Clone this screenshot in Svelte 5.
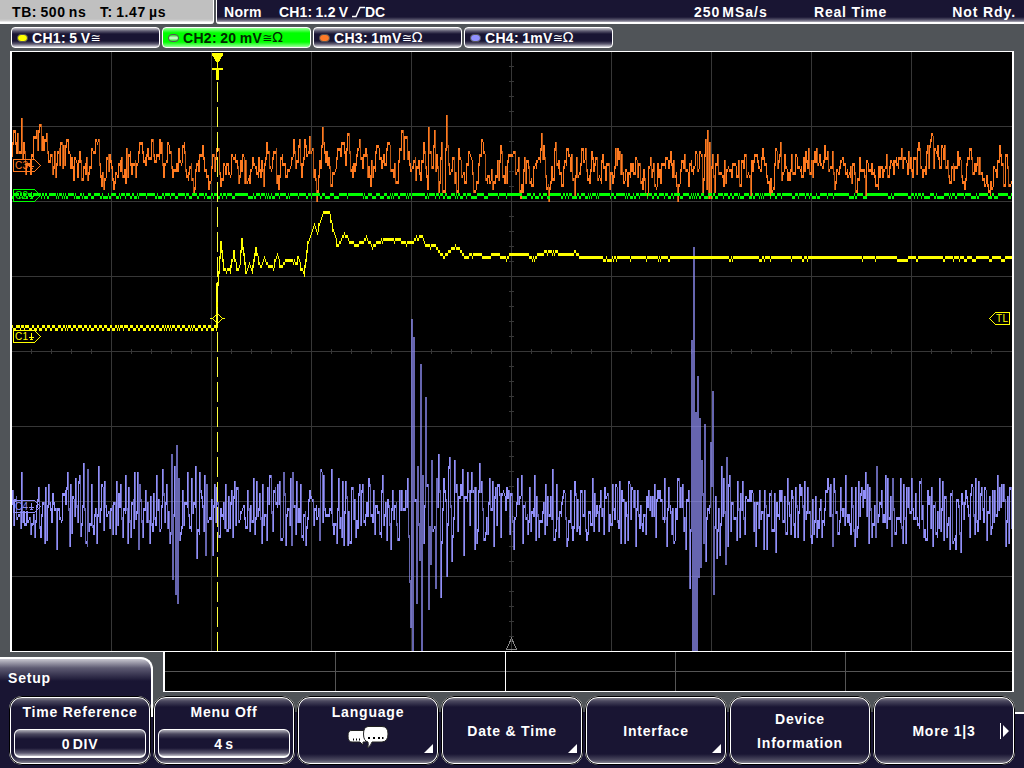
<script>
  const LEFT = 12;
  const RIGHT = 1011;
  const STEP = 3; // one ADC level on screen

  // small seeded generator so that the traces look the same on every load
  function random(seed) {
    let s = seed;
    return () => {
      s = (s * 1664525 + 1013904223) % 4294967296;
      return s / 4294967296;
    };
  }

  function parse(text) {
    return text
      .trim()
      .split(/\s+/)
      .map((p) => p.split(',').map(Number));
  }

  function lerp(points, x) {
    if (x <= points[0][0]) return points[0][1];
    for (let i = 1; i < points.length; i++) {
      const [x1, y1] = points[i];
      const [x0, y0] = points[i - 1];
      if (x <= x1) return y0 + ((y1 - y0) * (x - x0)) / (x1 - x0 || 1);
    }
    return points[points.length - 1][1];
  }

  // every column covers the range between a sample and the next one,
  // the beam is dimmer where the signal falls steeply
  function columns(ys) {
    let d = '';
    let dim = '';
    for (let i = 0; i < ys.length - 1; i++) {
      const diff = ys[i + 1] - ys[i];
      let top = ys[i];
      let bottom = top + STEP;
      if (Math.abs(diff) > STEP) {
        top = Math.min(ys[i], ys[i + 1]);
        bottom = Math.min(651, Math.max(ys[i], ys[i + 1]) + STEP);
      }
      const rect = `M${LEFT + i} ${top}h1V${bottom}h-1z`;
      if (diff > 12 || diff < -60) dim += rect;
      else d += rect;
    }
    return { d, dim };
  }

  const snap = (y, base) => base + Math.round((y - base) / STEP) * STEP;

  const c1Points = parse(`
    218,282 219,270 221,241 224,268 226,270 228,265 230,270 234,250 237,267 240,262 242,238 246,270
    249,262 252,270 256,247 260,266 264,257 268,264 273,267 277,253 281,266 285,260 292,260 297,261
    298,256 304,275 308,240 314,223 317,233 322,211 329,211 333,228 338,245 343,232 347,236 350,242
    358,243 366,236 372,245 378,240 388,238 398,239 412,242 416,235 422,235 425,244 435,244 440,253
    445,253 455,245 461,250 465,256 475,252 485,256 495,253 505,256 512,253 525,252 533,256 545,251
    555,250 565,254 575,251 580,256 1012,256`);

  const c3Points = parse(`
    12,153 14,130 18,133 22,118 25,150 30,160 34,135 37,131 40,124 43,137 47,133 50,160 54,167 58,150
    67,139 70,155 75,158 81,161 86,172 92,147 97,142 101,174 106,174 110,155 115,180 120,160 125,168
    130,150 136,175 140,142 145,157 152,139 155,160 160,139 163,163 168,142 172,165 178,170 184,142
    187,176 190,165 195,186 198,160 203,145 207,175 210,180 214,155 217,148 221,183 225,165 230,176
    235,154 240,175 243,155 248,178 252,165 258,175 262,160 264,183 267,142 270,167 275,152 280,175
    282,155 287,175 294,139 297,160 300,139 302,175 305,140 310,136 314,175 317,200 320,160 323,127
    327,150 330,165 332,183 335,170 338,148 342,142 345,152 348,133 352,165 353,175 360,139 363,165
    367,155 371,183 378,145 382,165 388,142 391,170 396,180 402,130 405,137 410,163 415,157 421,178
    424,142 428,188 429,127 432,165 435,130 439,190 442,142 443,190 447,115 448,145 450,173 454,157
    457,190 459,148 465,180 469,152 476,187 480,155 483,142 487,180 493,187 502,151 505,180 513,150
    518,170 521,195 528,160 532,185 537,160 542,133 546,175 549,200 556,142 562,184 567,148 575,192
    582,148 590,182 593,156 600,178 603,154 610,187 615,165 620,151 625,178 630,175 637,160 643,187
    650,162 655,184 660,170 670,160 675,175 678,200 685,154 689,184 696,151 700,151 703,190 705,155
    706,139 707,186 708,130 709,196 710,142 711,196 713,155 715,190 718,154 722,175 726,180 728,165
    734,162 740,183 743,160 747,175 751,192 755,155 760,170 763,148 770,192 773,186 777,152 780,155
    784,170 785,155 790,178 796,155 800,170 809,148 813,175 815,151 822,165 828,151 830,165 833,151
    835,187 843,157 850,175 856,190 861,170 866,192 868,164 880,175 890,165 896,158 902,149 906,160
    912,170 918,148 922,170 928,145 931,139 936,150 940,165 943,148 948,160 950,180 958,151 964,180
    970,148 974,172 980,157 988,184 990,192 996,170 1000,145 1004,183 1008,165 1011,180`);

  const c4Spikes = parse(`
    14,523 22,472 28,520 33,522 46,487 49,484 54,502 62,518 65,490 68,472 70,544 71,484 72,531 76,478
    81,534 84,463 86,541 88,469 89,529 93,525 97,541 99,466 102,484 104,528 105,481 116,532 121,484
    126,475 129,487 131,535 135,472 143,535 146,490 150,541 156,523 163,469 165,520 167,484 168,526
    170,541 172,454 173,577 175,466 176,592 177,445 178,601 179,478 181,532 188,472 190,526 196,466
    197,556 200,472 204,529 205,475 207,484 213,553 215,484 217,487 226,484 233,535 235,481 238,487
    246,526 254,478 257,481 262,541 263,484 267,538 271,475 274,490 284,472 286,543 291,478 292,543
    293,472 297,481 301,484 306,543 310,490 320,538 321,469 324,475 329,514 332,469 334,532 339,478
    342,535 344,543 346,481 348,543 352,487 356,535 360,484 363,484 365,523 370,484 374,490 381,535
    382,490 387,538 393,490 400,490 408,478 409,535 410,580 411,625 412,319 413,651 414,337 417,601
    418,466 420,558 421,364 422,651 423,475 424,541 426,397 427,484 429,607 431,562 432,460 433,529
    436,586 437,478 439,454 441,595 442,541 444,478 447,574 449,466 450,457 452,559 453,535 455,460
    457,484 458,529 461,484 463,469 464,553 468,472 474,487 475,547 478,529 480,463 482,481 486,532
    490,478 493,481 494,544 496,487 499,484 501,535 502,493 507,487 509,490 514,547 518,478 521,493
    523,541 528,532 535,475 539,535 546,484 545,532 557,484 559,535 563,496 568,538 571,490 582,490
    587,538 593,478 597,505 599,529 601,490 604,532 605,487 612,523 616,484 622,490 625,541 629,481
    632,487 636,544 635,490 640,526 647,496 655,484 656,535 660,490 667,544 669,487 675,538 681,487
    683,484 686,547 689,490 690,586 691,529 692,340 693,651 694,247 695,651 696,412 697,651 698,376
    699,575 700,418 701,565 702,460 704,541 705,424 706,559 708,508 711,442 712,484 713,391 714,592
    716,496 717,556 720,553 722,466 724,478 726,562 727,457 729,484 737,538 738,481 740,535 746,496
    753,493 760,490 764,547 767,547 771,490 776,550 780,490 782,490 788,478 787,532 796,487 798,535
    802,487 804,538 808,487 812,541 814,532 817,535 826,490 829,487 833,544 835,490 841,487 846,475
    851,532 852,487 866,472 869,541 876,535 882,490 888,478 892,544 893,478 895,532 901,478 903,541
    904,484 906,541 916,493 920,481 925,529 928,490 932,487 940,478 944,538 947,535 950,547 953,541
    952,490 956,547 961,550 966,490 970,535 972,484 973,487 975,532 976,478 982,487 987,538 991,532
    1004,484 1006,544 1008,496`);

  function ch1() {
    const rnd = random(11);
    const ys = [];
    for (let x = LEFT; x <= RIGHT + 1; x++) {
      if (x < 217) ys.push(Math.floor(x / 2.6) % 2 === 0 || rnd() < 0.1 ? 325 : 328);
      else if (x > 580) ys.push(ys.at(-1) === 259 && rnd() < 0.5 ? 259 : rnd() < 0.1 ? 259 : 256);
      else ys.push(snap(lerp(c1Points, x) + (rnd() < 0.12 ? 2 : 0), 256));
    }
    return columns(ys);
  }

  function ch2() {
    const rnd = random(5);
    const ys = [];
    let low = false;
    for (let x = LEFT; x <= RIGHT + 1; x++) {
      if (rnd() < (low ? 0.5 : 0.25)) low = !low;
      ys.push(low ? 196 : 193);
    }
    return columns(ys);
  }

  function ch3() {
    const rnd = random(42);
    const known = new Map(c3Points);
    const ys = [];
    for (let x = LEFT; x <= RIGHT + 1; x++) {
      if (known.has(x)) ys.push(snap(known.get(x), 163));
      else if (rnd() < 0.15) ys.push(ys.at(-1));
      else ys.push(snap((lerp(c3Points, x) * 2 + 165) / 3 + (rnd() + rnd() - 1) * 20, 163));
    }
    return columns(ys);
  }

  function ch4() {
    const rnd = random(77);
    const known = new Map(c4Spikes);
    const ys = [];
    for (let x = LEFT; x <= RIGHT + 1; x++) {
      if (known.has(x)) ys.push(known.get(x));
      else if (rnd() < 0.15 && !known.has(x - 1)) ys.push(ys.at(-1) ?? 505);
      else ys.push(snap(508 + (rnd() + rnd() + rnd() - 1.5) * 32, 508));
    }
    return columns(ys);
  }

  const traces = [
    { name: 'c4', ...ch4() },
    { name: 'c3', ...ch3() },
    { name: 'c2', ...ch2() },
    { name: 'c1', ...ch1() }
  ];

  const gridX = [111, 211, 311, 411, 511, 611, 711, 811, 911];
  const gridY = [126, 201, 276, 351, 426, 501, 576];
  const ticksX = Array.from({ length: 49 }, (_, i) => 31 + i * 20);
  const ticksY = Array.from({ length: 39 }, (_, i) => 66 + i * 15);

  const channels = [
    { name: 'CH1', scale: '5 V', ohm: false, cls: 'yellow' },
    { name: 'CH2', scale: '20 mV', ohm: true, cls: 'green' },
    { name: 'CH3', scale: '1mV', ohm: true, cls: 'orange' },
    { name: 'CH4', scale: '1mV', ohm: true, cls: 'blue' }
  ];

  const markers = [
    { label: 'C4', y: 506, cls: 'c4' },
    { label: 'C3', y: 165, cls: 'c3' },
    { label: 'C2', y: 195, cls: 'c2' },
    { label: 'C1', y: 336, cls: 'c1' }
  ];

  const menu = [
    { lines: ['Time Reference'], value: '0 DIV' },
    { lines: ['Menu Off'], value: '4 s' },
    { lines: ['Language'], bubbles: true, corner: true },
    { lines: ['Date & Time'], corner: true },
    { lines: ['Interface'], corner: true },
    { lines: ['Device', 'Information'] },
    { lines: ['More 1|3'], next: true }
  ];
</script>

<div class="scope">
  <header>
    <div class="timebase"><span class="tb">TB: 500 ns</span><span>T: 1.47 µs</span></div>
    <div class="status">
      <span class="mode">Norm</span>
      <span class="trigger">CH1: 1.2 V</span>
      <svg class="edge" width="13" height="12" viewBox="0 0 13 12"><path d="M0 10.5H4L8 1.5H13" /></svg>
      <span class="dc">DC</span>
      <span class="rate">250 MSa/s</span>
      <span class="acq">Real Time</span>
      <span class="ready">Not Rdy.</span>
    </div>
  </header>

  <div class="channels">
    {#each channels as ch}
      <div class="channel {ch.cls}">
        <i class="led"></i>
        <span>{ch.name}: {ch.scale}</span>
        <span class="coupling">≅{#if ch.ohm}<b>Ω</b>{/if}</span>
      </div>
    {/each}
  </div>

  <div class="screen">
    <svg width="1000" height="599" viewBox="12 52 1000 599" shape-rendering="crispEdges">
      <g class="grid">
        {#each gridX as x}<rect {x} y="52" width="1" height="599" />{/each}
        {#each gridY as y}<rect x="12" {y} width="1000" height="1" />{/each}
        {#each ticksX as x}<rect {x} y="349" width="1" height="5" />{/each}
        {#each ticksY as y}<rect x="509" {y} width="5" height="1" />{/each}
      </g>
      <path class="reference" d="M511.5 638L506.5 649.5H516.5Z" />
      {#each traces as t}
        <path class="trace dim {t.name}" d={t.dim} />
        <path class="trace {t.name}" d={t.d} />
      {/each}
      <rect class="trace c1" x="217" y="283" width="1" height="45" />
      {#each markers as m}
        <g class="marker {m.cls}" transform="translate(13 {m.y})">
          <path d="M.5 -5.5H21.5L27.5 .5L21.5 6.5H.5Z" />
          <path d="M18.500 -3V3M16 1.500H21M17 3.500H20" />
          <text x="2" y="4">{m.label}</text>
        </g>
      {/each}
      <g class="marker c1">
        <path d="M989.5 318.5L995.5 312.5H1009.5V324.5H995.5Z" />
        <text x="996" y="322">TL</text>
        <path d="M210 318.5H212.5L217.5 313.5L222.5 318.5L217.5 323.5L212.5 318.5M222.5 318.5H225" />
      </g>
      <path class="cursor" d="M217.5 82V651" />
      <path class="trace c1" d="M212 53H223V55L218 63V68H223V70H219V80H216V70H212V68H217V63L212 55Z" />
    </svg>
  </div>

  <div class="lower">
    <div class="tab">Setup</div>
    <div class="preview">
      <svg width="847" height="39" viewBox="165 652 847 39" shape-rendering="crispEdges">
        <path d="M165 671.5H1013M335.5 652V691M675.5 652V691M845.5 652V691" />
        <path class="mid" d="M505.5 652V691" />
      </svg>
    </div>
  </div>

  <div class="menu">
    {#each menu as item}
      <div class="key" class:top={item.value || item.bubbles}>
        {#each item.lines as line}<div class="line">{line}</div>{/each}
        {#if item.value}
          <div class="value">{item.value}</div>
        {/if}
        {#if item.bubbles}
          <svg class="bubbles" width="44" height="26" viewBox="0 0 44 26">
            <path d="M6 6.500H20V18H17V21L14 18H6Q2 18 2 12T6 6.500Z" />
            <path d="M22 2.500H36Q42 2.500 42 10T36 18H26Q25 22 21 24Q23 21 22 18Q17.500 17 17.500 10T22 2.500Z" />
            <path class="dots" d="M7 15.500H8M10 15.500H11M13 15.500H14M22 14H24M27 14H29M32 14H34M36 14H37.500" />
          </svg>
        {/if}
        {#if item.corner}
          <svg class="corner" width="10" height="10" viewBox="0 0 10 10"><path d="M9 0V9H0Z" /></svg>
        {/if}
        {#if item.next}
          <svg class="next" width="9" height="16" viewBox="0 0 9 16"><path d="M0 0H1V16H0ZM3 2L9 8L3 14Z" /></svg>
        {/if}
      </div>
    {/each}
  </div>
</div>

<style>
  :global(body) {
    background: #505458;
    overflow: hidden;
  }

  .scope {
    width: 1024px;
    height: 768px;
    box-sizing: border-box;
    background: #505458;
    color: #fff;
    font: bold 14px/16px 'Liberation Sans', Arial, sans-serif;
    letter-spacing: 0.4px;
    white-space: nowrap;
    overflow: hidden;
  }

  header {
    display: flex;
    gap: 2px;
    height: 24px;
  }

  .timebase {
    box-sizing: border-box;
    width: 214px;
    display: flex;
    padding: 4px 0 0 12px;
    background: linear-gradient(#c0c0c0 19px, #d4d4d4 21px, #fff 22px);
    border-right: 1px solid #fff;
    border-radius: 0 0 3px 0;
    color: #000;
    letter-spacing: 0.6px;
  }

  .timebase span {
    word-spacing: -1.2px;
  }

  .tb {
    width: 88px;
  }

  .status {
    flex: 1;
    box-sizing: border-box;
    display: flex;
    padding: 4px 8px 0 7px;
    background: linear-gradient(#191533 17px, #5b586f 20px, #b0aeba 22px, #fff 22px);
    border-left: 1px solid #fff;
    border-radius: 0 0 0 3px;
  }

  .mode {
    width: 55px;
    letter-spacing: 0.3px;
  }

  .trigger {
    width: 73px;
    letter-spacing: 0.2px;
    word-spacing: -1px;
  }

  .edge {
    margin-top: 2px;
  }

  .edge path {
    fill: none;
    stroke: #fff;
    stroke-width: 1.5;
  }

  .dc {
    width: 329px;
    letter-spacing: 0;
  }

  .rate {
    width: 120px;
    letter-spacing: 1px;
    word-spacing: -3px;
  }

  .acq {
    letter-spacing: 0.8px;
  }

  .ready {
    margin-left: auto;
    letter-spacing: 0.9px;
  }

  .channels {
    display: flex;
    gap: 2px;
    padding: 3px 0 3px 11px;
  }

  .channel {
    box-sizing: border-box;
    width: 149px;
    height: 21px;
    display: flex;
    align-items: center;
    padding-left: 5px;
    border: 1px solid #fff;
    border-radius: 4px;
    background: linear-gradient(#c8c7ce, #5d5a70 3px, #191533 6px, #191533 13px, #5d5a70 16px, #dddce2);
    letter-spacing: 0.3px;
    word-spacing: -0.8px;
  }

  .channel.green {
    background: linear-gradient(#9f9, #0f0 5px, #0f0 14px, #9f9);
    color: #002a00;
  }

  .led {
    width: 9px;
    height: 6px;
    margin-right: 4px;
    border-radius: 4px;
    border: 1px solid #555;
    background: #ff0;
  }

  .green .led {
    background: linear-gradient(#2d2, #dfd, #2d2);
  }

  .orange .led {
    background: #ff7a28;
  }

  .blue .led {
    background: #9090ff;
  }

  .coupling {
    font: 12px/16px 'DejaVu Sans', sans-serif;
    letter-spacing: 0;
  }

  .coupling b {
    font-weight: normal;
    font-size: 14px;
  }

  .screen {
    width: 1000px;
    height: 599px;
    margin-left: 10px;
    border: solid #fff;
    border-width: 1px 2px;
    background: #000;
  }

  svg {
    display: block;
  }

  .grid {
    fill: #373737;
  }

  .reference {
    fill: none;
    stroke: #888;
  }

  .trace.c1 {
    fill: #ff0;
  }

  .trace.c2 {
    fill: #0f0;
  }

  .trace.c3 {
    fill: #ff7a20;
  }

  .trace.c4 {
    fill: #9290fa;
  }

  .trace.dim {
    opacity: 0.7;
  }

  .cursor {
    fill: none;
    stroke: #ffff3c;
    stroke-dasharray: 20 5;
  }

  .marker path {
    fill: none;
    stroke: currentColor;
  }

  .marker text {
    fill: currentColor;
    font: 10px 'Liberation Sans', Arial, sans-serif;
    letter-spacing: 0.4px;
  }

  .marker.c1 {
    color: #ff0;
  }

  .marker.c2 {
    color: #0f0;
  }

  .marker.c3 {
    color: #ff7a20;
  }

  .marker.c4 {
    color: #8c8cf8;
  }

  .lower {
    display: flex;
    justify-content: space-between;
    height: 44px;
    padding-right: 10px;
  }

  .tab {
    box-sizing: border-box;
    width: 153px;
    height: 60px;
    margin-top: 5px;
    padding: 11px 0 0 8px;
    border: solid #fff;
    border-width: 2px 2px 0 0;
    border-radius: 0 12px 0 0;
    background: linear-gradient(#c8c7d0, #5d5a72 9px, #191533 22px);
    letter-spacing: 0.8px;
  }

  .preview {
    width: 847px;
    height: 39px;
    border: solid #fff;
    border-width: 0 2px 1px 2px;
    background: #000;
  }

  .preview path {
    fill: none;
    stroke: #555;
  }

  .preview .mid {
    stroke: #fff;
  }

  .menu {
    display: flex;
    gap: 2px;
    height: 72px;
    box-sizing: border-box;
    padding-left: 9px;
    background:
      linear-gradient(#191533, #191533) 0 0 / 151px 72px no-repeat,
      linear-gradient(#fff, #fff) right 16px / 9px 2px no-repeat,
      linear-gradient(transparent 16px, #191533 16px);
  }

  .key {
    position: relative;
    box-sizing: border-box;
    width: 142px;
    height: 69px;
    display: flex;
    flex-direction: column;
    justify-content: center;
    align-items: center;
    border: 2px solid #fff;
    border-radius: 13px;
    outline: 1px solid #000;
    outline-offset: -1px;
    background: linear-gradient(#85838f, #4b485f 3px, #191533 9px, #191533 56px, #4b485f 62px, #85838f);
    letter-spacing: 0.8px;
  }

  .key.top {
    justify-content: flex-start;
    padding-top: 6px;
  }

  .key .line + .line {
    margin-top: 8px;
  }

  .value {
    box-sizing: border-box;
    width: 132px;
    height: 29px;
    margin-top: 9px;
    padding-top: 6px;
    border: 1px solid #fff;
    border-bottom-width: 2px;
    border-radius: 6px;
    background: linear-gradient(#b0afb9, #4b485f 4px, #191533 9px, #191533 18px, #5b586f 23px, #c0bfc8);
    text-align: center;
    letter-spacing: 0.7px;
    word-spacing: -2px;
  }

  .bubbles {
    margin-top: 4px;
  }

  .bubbles path {
    fill: #fff;
    stroke: #222;
  }

  .bubbles .dots {
    stroke: #000;
    stroke-width: 2;
  }

  .corner {
    position: absolute;
    right: 3px;
    bottom: 9px;
  }

  .next {
    position: absolute;
    right: 4px;
    top: 25px;
  }

  .corner path,
  .next path {
    fill: #fff;
  }
</style>
